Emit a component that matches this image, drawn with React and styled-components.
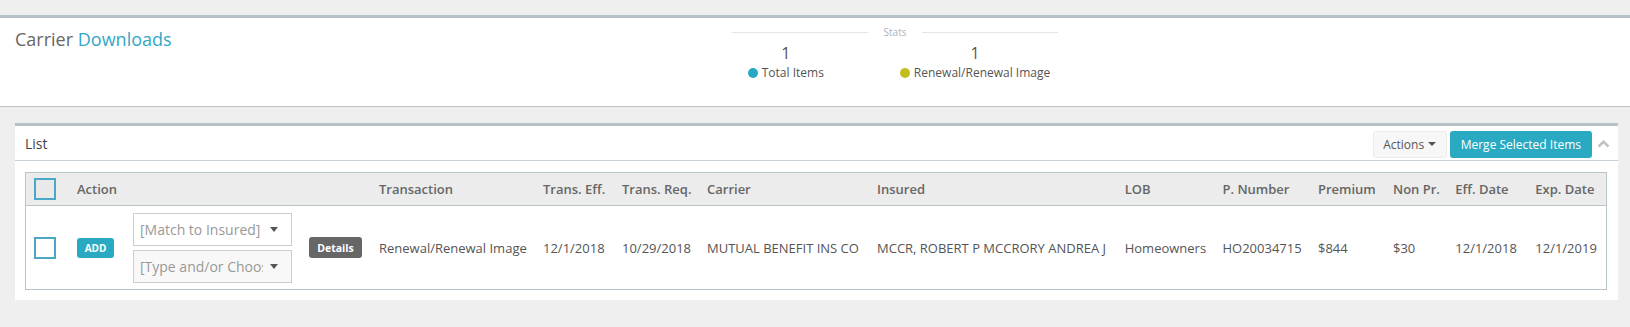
import React from 'react';
import styled, { createGlobalStyle } from 'styled-components';

const GlobalStyle = createGlobalStyle`
    body {
        margin: 0;
        background: #efefef;
        font-family: "Open Sans", "Liberation Sans", sans-serif;
    }
`;

const TEAL = '#2aaac2';

const HeaderBar = styled.div`
    margin-top: 15px;
    height: 92px;
    box-sizing: border-box;
    background: #fff;
    border-top: 3px solid #b5c0c7;
    border-bottom: 1px solid #b9c2c8;
    padding: 7px 15px 0;
    display: grid;
    grid-template-columns: 717px 326px;
    align-items: start;
`;

const Title = styled.div`
    margin-top: 2px;
    font-size: 18px;
    line-height: 24px;
    color: #666;
    span {
        color: #33a7c7;
    }
`;

const Stats = styled.div`
    display: flex;
    flex-direction: column;
`;

const Legend = styled.div`
    display: flex;
    align-items: center;
    gap: 16px;
    font-size: 10px;
    line-height: 14px;
    color: #a9b3ba;
    &::before, &::after {
        content: '';
        flex: 1;
        height: 1px;
        background: #e3e6e8;
    }
`;

const StatsRow = styled.div`
    margin-top: 4px;
    padding-left: 8px;
    display: flex;
    justify-content: center;
    gap: 76px;
`;

const StatItem = styled.div`
    display: flex;
    flex-direction: column;
    align-items: center;
`;

const StatValue = styled.div`
    font-size: 16px;
    line-height: 20px;
    color: #555;
`;

const StatLabel = styled.div`
    margin-top: 2px;
    display: flex;
    align-items: center;
    font-size: 12px;
    line-height: 16px;
    color: #555;
    white-space: nowrap;
`;

const Dot = styled.i`
    width: 10px;
    height: 10px;
    border-radius: 50%;
    margin-right: 4px;
    background: ${p => p.color};
`;

const ListPanel = styled.div`
    margin: 16px 12px 0 15px;
    background: #fff;
    border-top: 3px solid #b5c0c7;
    padding-bottom: 10px;
`;

const PanelHead = styled.div`
    height: 35px;
    box-sizing: border-box;
    border-bottom: 1px solid #c9d1d6;
    padding: 0 8px 0 10px;
    display: flex;
    align-items: center;
    justify-content: space-between;
`;

const PanelTitle = styled.div`
    font-size: 14px;
    color: #444;
`;

const Tools = styled.div`
    display: flex;
    align-items: center;
    gap: 3px;
    padding-top: 2px;
`;

const ActionsButton = styled.button`
    width: 74px;
    height: 27px;
    box-sizing: border-box;
    background: #f7f7f7;
    border: 1px solid #ececec;
    border-radius: 3px;
    font-family: inherit;
    font-size: 12px;
    color: #555;
    display: flex;
    align-items: center;
    justify-content: center;
    gap: 4px;
    padding: 0;
`;

const Caret = styled.i`
    width: 0;
    height: 0;
    border-left: 4px solid transparent;
    border-right: 4px solid transparent;
    border-top: ${p => p.size || 4}px solid #555;
`;

const MergeButton = styled.button`
    height: 27px;
    padding: 0 11px;
    background: ${TEAL};
    border: none;
    border-radius: 3px;
    font-family: inherit;
    font-size: 12px;
    color: #fff;
`;

const Collapse = styled.svg`
    margin-left: 2px;
    width: 13px;
    height: 8px;
`;

const Table = styled.div`
    margin: 11px 11px 0 10px;
    border: 1px solid #b9c4ca;
`;

// column starts follow the header labels of the list
const COLS = '51px 56px 176px 70px 164px 79px 85px 170px 247.7px 97.8px 95.5px 75px 62.3px 80px 1fr';

const HeadRow = styled.div`
    display: grid;
    grid-template-columns: ${COLS};
    align-items: center;
    height: 33px;
    box-sizing: border-box;
    background: #ececec;
    border-bottom: 1px solid #b9c4ca;
    font-size: 13px;
    font-weight: 600;
    color: #666;
    white-space: nowrap;
`;

const BodyRow = styled.div`
    display: grid;
    grid-template-columns: ${COLS};
    align-items: center;
    height: 83px;
    font-size: 13px;
    color: #555;
    white-space: nowrap;
`;

const Cell = styled.div``;

const CheckCell = styled.div`
    padding-left: 8px;
    display: flex;
`;

const Check = styled.span`
    width: 22px;
    height: 22px;
    box-sizing: border-box;
    border: 2px solid #4aa7c8;
    background: ${p => p.fill || '#fff'};
`;

const AddButton = styled.span`
    display: inline-flex;
    align-items: center;
    justify-content: center;
    width: 37px;
    height: 20px;
    border-radius: 3px;
    background: ${TEAL};
    color: #fff;
    font-size: 10px;
    font-weight: 700;
`;

const DetailsButton = styled.span`
    display: inline-flex;
    align-items: center;
    justify-content: center;
    width: 53px;
    height: 21px;
    border-radius: 3px;
    background: #666;
    color: #fff;
    font-size: 10.5px;
    font-weight: 700;
`;

const Selects = styled.div`
    display: flex;
    flex-direction: column;
    gap: 4px;
`;

const Select = styled.div`
    width: 159px;
    height: 33px;
    box-sizing: border-box;
    border: 1px solid #c6cfd4;
    background: ${p => p.bg || '#fff'};
    padding: 0 13px 0 6px;
    display: flex;
    align-items: center;
    font-size: 14px;
    color: #999;
`;

const SelectText = styled.span`
    flex: 1;
    overflow: hidden;
    white-space: nowrap;
    margin-right: 7px;
`;

const headers = ['Transaction', 'Trans. Eff.', 'Trans. Req.', 'Carrier', 'Insured', 'LOB', 'P. Number', 'Premium', 'Non Pr.', 'Eff. Date', 'Exp. Date'];

const row = [
    'Renewal/Renewal Image',
    '12/1/2018',
    '10/29/2018',
    'MUTUAL BENEFIT INS CO',
    'MCCR, ROBERT P MCCRORY ANDREA J',
    'Homeowners',
    'HO20034715',
    '$844',
    '$30',
    '12/1/2018',
    '12/1/2019',
];

const App = () => {
    return (
        <>
            <GlobalStyle />
            <HeaderBar>
                <Title>Carrier <span>Downloads</span></Title>
                <Stats>
                    <Legend>Stats</Legend>
                    <StatsRow>
                        <StatItem>
                            <StatValue>1</StatValue>
                            <StatLabel><Dot color="#27a9c4" />Total Items</StatLabel>
                        </StatItem>
                        <StatItem>
                            <StatValue>1</StatValue>
                            <StatLabel><Dot color="#c3bd1d" />Renewal/Renewal Image</StatLabel>
                        </StatItem>
                    </StatsRow>
                </Stats>
            </HeaderBar>

            <ListPanel>
                <PanelHead>
                    <PanelTitle>List</PanelTitle>
                    <Tools>
                        <ActionsButton>Actions <Caret /></ActionsButton>
                        <MergeButton>Merge Selected Items</MergeButton>
                        <Collapse viewBox="0 0 13 8">
                            <polyline points="1.5,6.5 6.5,1.8 11.5,6.5" fill="none" stroke="#c2c2c2" strokeWidth="2.6" />
                        </Collapse>
                    </Tools>
                </PanelHead>

                <Table>
                    <HeadRow>
                        <CheckCell><Check fill="#e9e9e9" /></CheckCell>
                        <Cell>Action</Cell>
                        <Cell />
                        <Cell />
                        {headers.map(h => <Cell key={h}>{h}</Cell>)}
                    </HeadRow>
                    <BodyRow>
                        <CheckCell><Check /></CheckCell>
                        <Cell><AddButton>ADD</AddButton></Cell>
                        <Cell>
                            <Selects>
                                <Select>
                                    <SelectText>[Match to Insured]</SelectText>
                                    <Caret size={5} />
                                </Select>
                                <Select bg="#f8f8f8">
                                    <SelectText>[Type and/or Choose]</SelectText>
                                    <Caret size={5} />
                                </Select>
                            </Selects>
                        </Cell>
                        <Cell><DetailsButton>Details</DetailsButton></Cell>
                        {row.map((text, i) => <Cell key={i}>{text}</Cell>)}
                    </BodyRow>
                </Table>
            </ListPanel>
        </>
    );
};

export default App;
